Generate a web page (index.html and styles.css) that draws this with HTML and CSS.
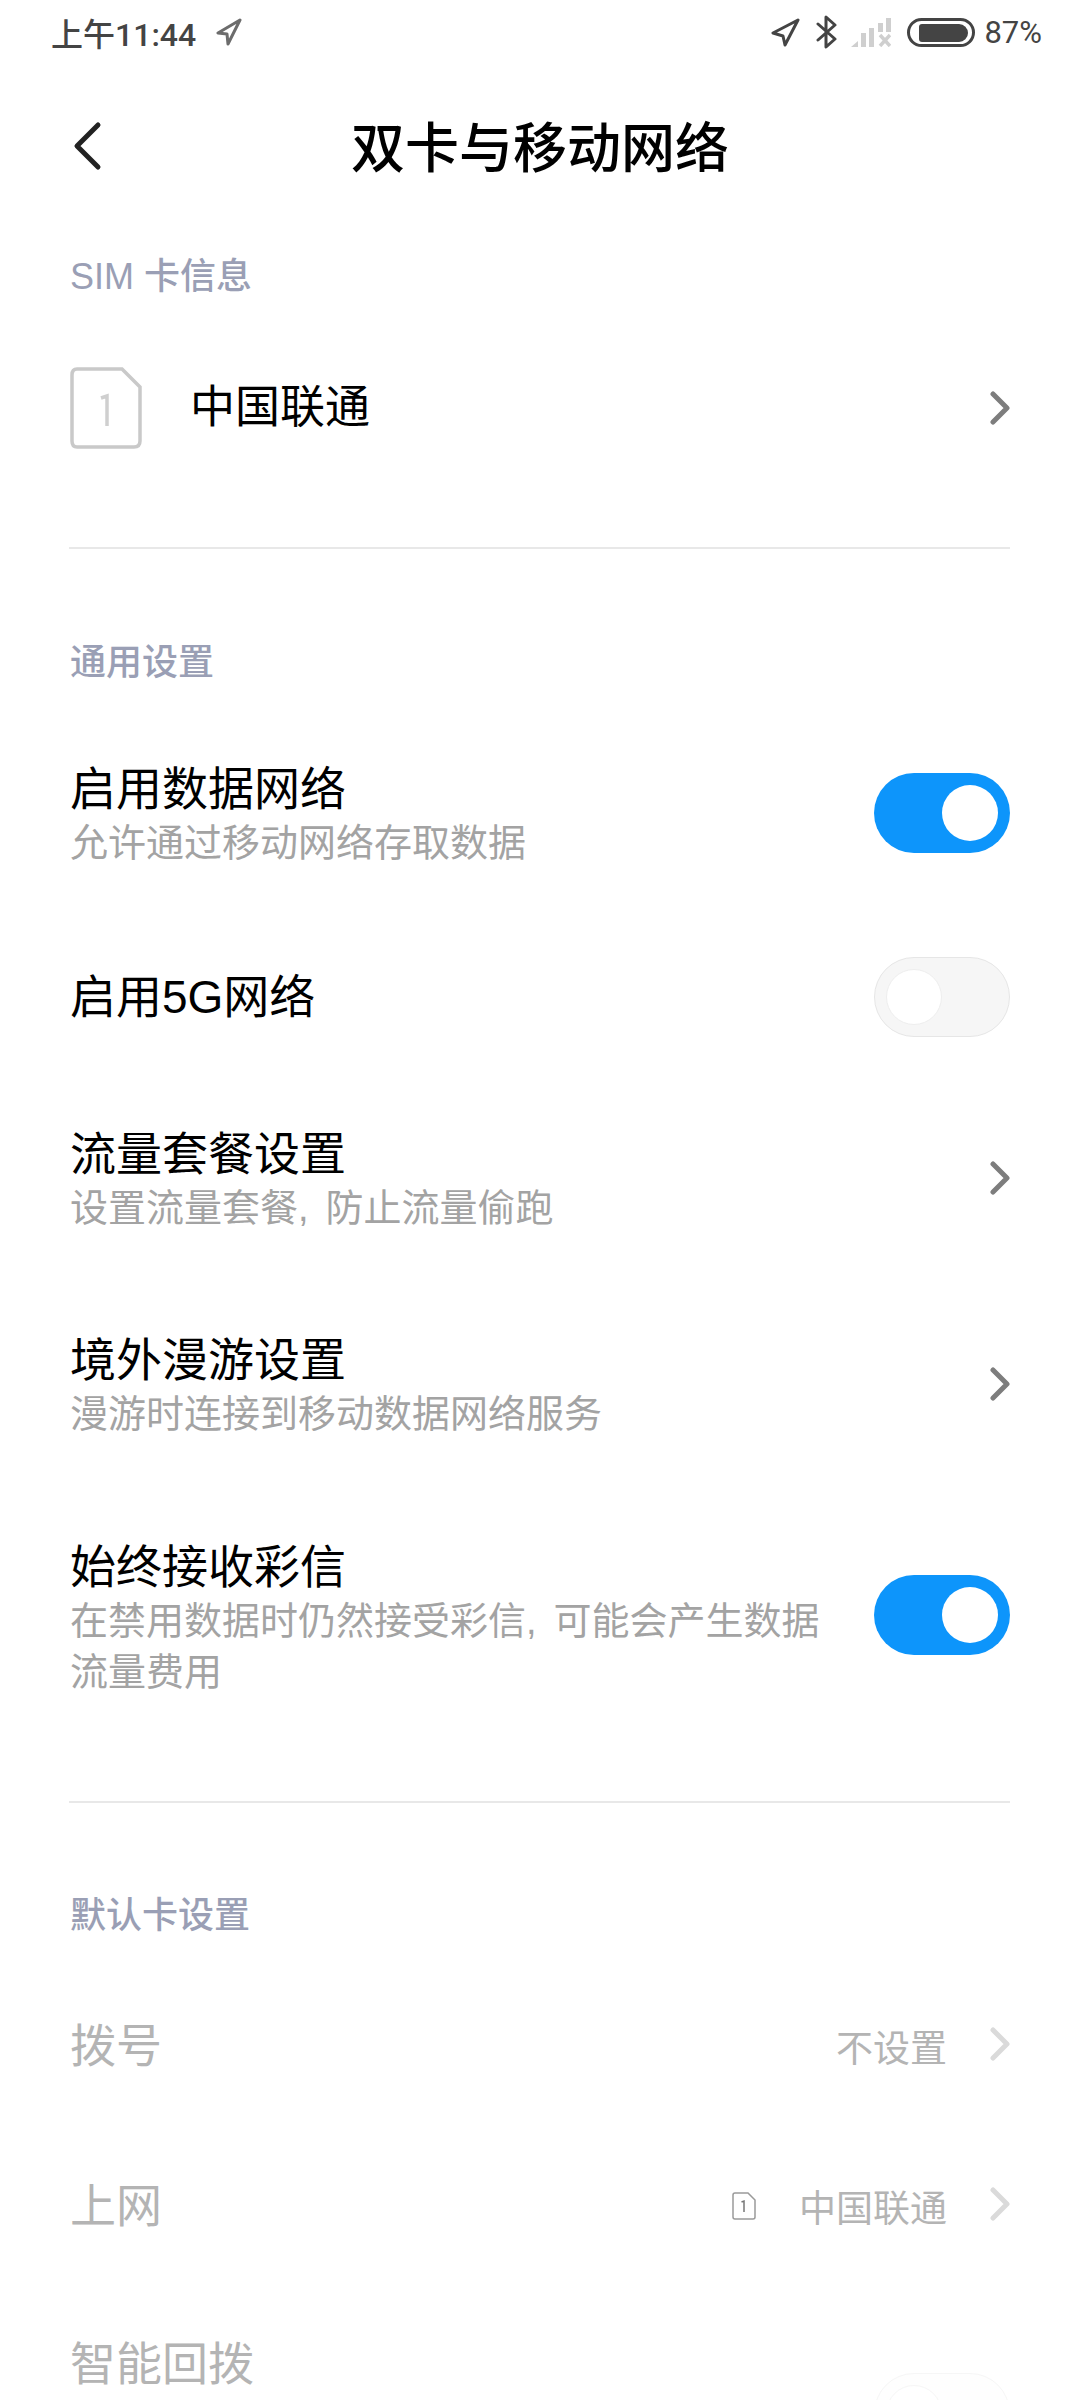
FILE: index.html
```html
<!DOCTYPE html>
<html lang="zh-CN">
<head>
    <meta charset="UTF-8">
    <meta name="viewport" content="width=device-width, initial-scale=1.0">
    <title>双卡与移动网络</title>
    <link rel="stylesheet" href="styles.css">
</head>
<body>
    <div class="status-bar">
        <div class="status-left">
            <span class="clock">上午11:44</span>
            <svg class="ico-loc-small" viewBox="0 0 26 28"><path d="M24 2 L2 15 L11 16 L12 26 Z" fill="none" stroke="#6c6c6c" stroke-width="3" stroke-linejoin="round"/></svg>
        </div>
        <div class="status-right">
            <svg class="ico-loc" viewBox="0 0 29 29"><path d="M27 2 L2 15 L12 18 L14 27 Z" fill="none" stroke="#444" stroke-width="3" stroke-linejoin="round"/></svg>
            <svg class="ico-bt" viewBox="0 0 21 34"><path d="M2 9 L19 24 L10 32 V2 L19 10 L2 25" fill="none" stroke="#444" stroke-width="3" stroke-linejoin="round" stroke-linecap="round"/></svg>
            <svg class="ico-signal" viewBox="0 0 40 29"><g fill="#cfcfcf"><path d="M0 29 L7 23 V29 Z"/><rect x="10" y="15" width="5" height="14"/><rect x="18" y="10" width="5" height="19"/><rect x="27" y="5" width="5" height="9"/><rect x="35" y="0" width="5" height="14"/></g><path d="M29 17 L39 28 M39 17 L29 28" stroke="#cfcfcf" stroke-width="3.5"/></svg>
            <div class="battery"><div class="battery-fill"></div></div>
            <span class="percent">87%</span>
        </div>
    </div>

    <div class="title-bar">
        <svg class="back" viewBox="0 0 30 50"><path d="M26 4 L5 25 L26 46" fill="none" stroke="#222" stroke-width="5" stroke-linecap="round" stroke-linejoin="round"/></svg>
        <h1>双卡与移动网络</h1>
    </div>

    <div class="section-head head-sim">SIM 卡信息</div>
    <div class="row sim-row">
        <svg class="sim-icon" viewBox="0 0 72 82"><path d="M7 2 H52 L70 20 V74 Q70 80 64 80 H7 Q2 80 2 74 V8 Q2 2 7 2 Z" fill="none" stroke="#c9c9c9" stroke-width="3.5"/><path d="M31 31 L37 29 V59" fill="none" stroke="#cfcfcf" stroke-width="3.5"/></svg>
        <span class="row-title sim-name">中国联通</span>
        <svg class="chevron" viewBox="0 0 20 34"><path d="M3 3 L17 17 L3 31" fill="none" stroke="#7d7d7d" stroke-width="5" stroke-linecap="round" stroke-linejoin="round"/></svg>
    </div>
    <div class="divider"></div>

    <div class="section-head head-general">通用设置</div>
    <div class="row r1">
        <div class="row-text">
            <div class="row-title">启用数据网络</div>
            <div class="row-sub">允许通过移动网络存取数据</div>
        </div>
        <div class="toggle on"><div class="knob"></div></div>
    </div>
    <div class="row r2">
        <div class="row-text"><div class="row-title">启用5G网络</div></div>
        <div class="toggle"><div class="knob"></div></div>
    </div>
    <div class="row r3">
        <div class="row-text">
            <div class="row-title">流量套餐设置</div>
            <div class="row-sub">设置流量套餐<span class="comma">,</span>防止流量偷跑</div>
        </div>
        <svg class="chevron" viewBox="0 0 20 34"><path d="M3 3 L17 17 L3 31" fill="none" stroke="#7d7d7d" stroke-width="5" stroke-linecap="round" stroke-linejoin="round"/></svg>
    </div>
    <div class="row r4">
        <div class="row-text">
            <div class="row-title">境外漫游设置</div>
            <div class="row-sub">漫游时连接到移动数据网络服务</div>
        </div>
        <svg class="chevron" viewBox="0 0 20 34"><path d="M3 3 L17 17 L3 31" fill="none" stroke="#7d7d7d" stroke-width="5" stroke-linecap="round" stroke-linejoin="round"/></svg>
    </div>
    <div class="row r5">
        <div class="row-text wrap">
            <div class="row-title">始终接收彩信</div>
            <div class="row-sub">在禁用数据时仍然接受彩信<span class="comma">,</span>可能会产生数据流量费用</div>
        </div>
        <div class="toggle on"><div class="knob"></div></div>
    </div>
    <div class="divider div2"></div>

    <div class="section-head head-default">默认卡设置</div>
    <div class="row r6 disabled">
        <span class="row-title">拨号</span>
        <span class="row-value">不设置</span>
        <svg class="chevron" viewBox="0 0 20 34"><path d="M3 3 L17 17 L3 31" fill="none" stroke="#dadada" stroke-width="5" stroke-linecap="round" stroke-linejoin="round"/></svg>
    </div>
    <div class="row r7 disabled">
        <span class="row-title">上网</span>
        <svg class="sim-mini" viewBox="0 0 24 28"><path d="M3 1 H16 L23 8 V25 Q23 27 21 27 H3 Q1 27 1 25 V3 Q1 1 3 1 Z" fill="none" stroke="#9a9a9a" stroke-width="1.5"/><path d="M9.5 10 L12 9 V20" fill="none" stroke="#777" stroke-width="1.5"/></svg>
        <span class="row-value net-value">中国联通</span>
        <svg class="chevron" viewBox="0 0 20 34"><path d="M3 3 L17 17 L3 31" fill="none" stroke="#dadada" stroke-width="5" stroke-linecap="round" stroke-linejoin="round"/></svg>
    </div>
    <div class="row r8 disabled">
        <span class="row-title">智能回拨</span>
        <div class="toggle ghost"><div class="knob"></div></div>
    </div>
</body>
</html>
```

FILE: styles.css
```css
html, body {
    margin: 0;
    padding: 0;
}
body {
    width: 1080px;
    height: 2400px;
    overflow: hidden;
    background-color: #fff;
    font-family: "Liberation Sans", "Noto Sans CJK SC", sans-serif;
    color: #000;
}
.status-bar {
    height: 64px;
    padding: 0 38px 2px 51px;
    display: flex;
    align-items: center;
    justify-content: space-between;
    color: #444;
}
.status-left, .status-right {
    display: flex;
    align-items: center;
}
.clock {
    font-size: 32px;
    font-weight: 500;
    font-family: "Roboto", "Noto Sans CJK SC", sans-serif;
}
.percent {
    font-size: 31px;
    font-family: "Roboto", sans-serif;
    margin-left: 9px;
}
.ico-loc-small {
    width: 26px;
    height: 28px;
    margin-left: 20px;
}
.ico-loc {
    width: 29px;
    height: 29px;
}
.ico-bt {
    width: 21px;
    height: 34px;
    margin-left: 16px;
}
.ico-signal {
    width: 40px;
    height: 29px;
    margin-left: 14px;
}
.battery {
    box-sizing: border-box;
    width: 68px;
    height: 29px;
    margin-left: 16px;
    border: 3px solid #444;
    border-radius: 15px;
    padding: 3px 4px 2px 9px;
}
.battery-fill {
    height: 100%;
    background-color: #444;
    border-radius: 3px 9px 9px 3px;
}

.title-bar {
    height: 164px;
    display: flex;
    align-items: center;
    justify-content: center;
    position: relative;
}
.title-bar h1 {
    margin: 0 0 6px 0;
    font-family: "Noto Sans CJK SC", sans-serif;
    font-size: 54px;
    font-weight: 500;
    line-height: 1;
}
.back {
    position: absolute;
    left: 72px;
    top: 55px;
    width: 30px;
    height: 50px;
}

.section-head {
    padding-left: 70px;
    font-size: 36px;
    line-height: 48px;
    font-weight: 500;
    color: #9a9fb5;
}
.head-sim { margin-top: 23px; }
.head-general { margin-top: 90px; }
.head-default { margin-top: 89px; }

.row {
    margin: 0 70px;
    display: flex;
    align-items: center;
}
.row-text {
    flex: 1;
}
.row-text.wrap {
    max-width: 770px;
    flex: none;
    margin-right: auto;
}
.row-title {
    font-size: 46px;
    line-height: 58px;
    color: #000;
}
.row-sub {
    font-size: 38px;
    line-height: 51px;
    color: #a3a3a3;
}
.comma {
    margin-right: 17px;
}
.chevron {
    width: 20px;
    height: 34px;
    margin-left: auto;
}
.row-text + .chevron, .disabled .chevron {
    margin-bottom: 4px;
}
.toggle {
    box-sizing: border-box;
    width: 136px;
    height: 80px;
    margin-left: auto;
    border-radius: 40px;
    background-color: #f6f6f6;
    border: 1px solid #e6e6e6;
    padding: 11px;
    display: flex;
    justify-content: flex-start;
}
.toggle.on {
    background-color: #0d95fb;
    border: none;
    padding: 12px;
    justify-content: flex-end;
}
.r1 .toggle { margin-bottom: 3px; }
.r5 .toggle { margin-bottom: 6px; }
.knob {
    width: 56px;
    height: 56px;
    border-radius: 50%;
    background-color: #fff;
    border: 1px solid #eee;
    box-sizing: border-box;
}
.toggle.on .knob { border: none; }
.toggle.ghost {
    margin-top: 38px;
    background-color: #fefefe;
    border-color: #f6f6f6;
}
.toggle.ghost .knob { border-color: #f6f6f6; }

.sim-row { height: 124px; margin-top: 45px; }
.sim-icon {
    width: 72px;
    height: 82px;
}
.sim-name {
    margin-left: 48px;
    font-size: 45px;
}

.divider {
    height: 2px;
    background-color: #e8e8e8;
    margin: 77px 70px 0 69px;
}
.div2 { margin-top: 103px; }

.r1 { margin-top: 73px; }
.r2 { margin-top: 88px; }
.r3 { margin-top: 88px; }
.r4 { margin-top: 97px; }
.r5 { margin-top: 98px; }

.disabled .row-title { color: #b4b4b4; }
.row-value {
    font-size: 37px;
    color: #b4b4b4;
    margin-left: auto;
    margin-right: 43px;
}
.disabled .chevron { margin-left: 0; }
.sim-mini {
    width: 24px;
    height: 28px;
    margin-left: auto;
}
.net-value { margin-left: 43px; }
.r6 { margin-top: 77px; }
.r7 { margin-top: 102px; }
.r8 { margin-top: 100px; align-items: flex-start; }
```
